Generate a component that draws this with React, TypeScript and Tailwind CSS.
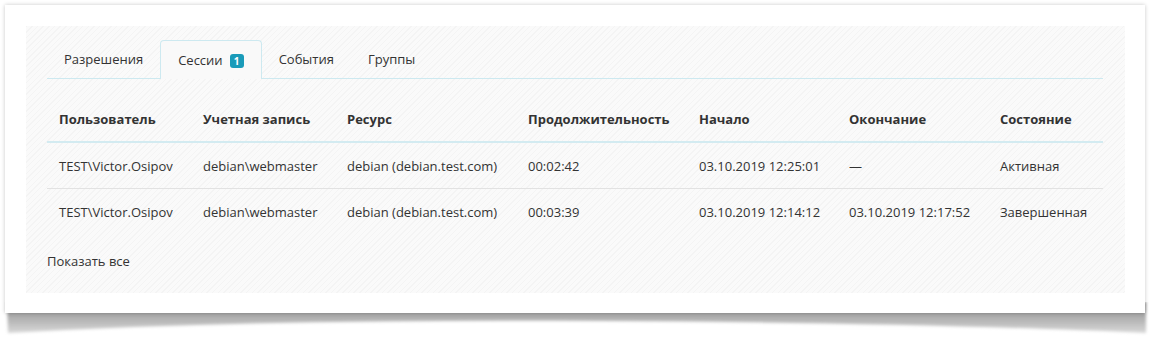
import React from 'react';

const columns = [
  'Пользователь',
  'Учетная запись',
  'Ресурс',
  'Продолжительность',
  'Начало',
  'Окончание',
  'Состояние',
];

const sessions = [
  ['TEST\\Victor.Osipov', 'debian\\webmaster', 'debian (debian.test.com)', '00:02:42', '03.10.2019 12:25:01', '—', 'Активная'],
  ['TEST\\Victor.Osipov', 'debian\\webmaster', 'debian (debian.test.com)', '00:03:39', '03.10.2019 12:14:12', '03.10.2019 12:17:52', 'Завершенная'],
];

const gridCols = 'grid grid-cols-[144px_144px_181px_171px_150px_151px_1fr]';

// curled "paper" shadow under the card
function CurlShadow() {
  return (
    <svg className="absolute left-0 top-[302px] -z-10" width="1152" height="40" viewBox="0 0 1152 40">
      <defs>
        <linearGradient id="sh" x1="0" y1="0" x2="0" y2="1">
          <stop offset="0" stopColor="#858585" />
          <stop offset="1" stopColor="#d8d8d8" />
        </linearGradient>
        <filter id="bl" x="-5%" y="-50%" width="110%" height="200%">
          <feGaussianBlur stdDeviation="1.6" />
        </filter>
      </defs>
      <path
        d="M7 0 H1146 V31 C1000 24 800 20 600 19 C400 18 200 20 8 31 Z"
        fill="url(#sh)"
        filter="url(#bl)"
      />
    </svg>
  );
}

export default function App() {
  return (
    <div className="relative isolate h-[343px] w-[1159px] bg-white pl-[5px] pt-[5px] font-['Open_Sans',sans-serif] text-[13px] text-[#333]">
      <CurlShadow />
      <div className="h-[308px] w-[1140px] bg-white pt-[21px] pl-[21px] shadow-[0_0_4px_rgba(0,0,0,0.22)]">
        <div className="h-[267px] w-[1099px] bg-[repeating-linear-gradient(135deg,#f4f4f4_0px,#f4f4f4_1px,#fafafa_1px,#fafafa_4px)] pt-[14px] pl-[21px] pr-[22px]">
          {/* Tabs */}
          <div className="flex h-[39px] border-b border-[#cde9f0]">
            <div className="flex items-center px-[17px] pt-[2px]">Разрешения</div>
            <div className="-mb-px flex items-center gap-[7px] rounded-t-[4px] border border-b-0 border-[#cde9f0] bg-[#f9f9f9] px-[17px] pt-[2px]">
              Сессии
              <span className="flex h-[14px] w-[14px] items-center justify-center rounded-[3px] bg-[#1a9bb9] text-[10px] font-bold leading-none text-white">
                1
              </span>
            </div>
            <div className="flex items-center px-[17px] pt-[2px]">События</div>
            <div className="flex items-center px-[17px] pt-[2px]">Группы</div>
          </div>

          {/* Table */}
          <div className={`${gridCols} mt-[18px] h-[46px] items-center border-b-2 border-[#d3ebf1] pt-[1px] font-bold`}>
            {columns.map((c) => (
              <div key={c} className="pl-[12px]">{c}</div>
            ))}
          </div>
          {sessions.map((row, i) => (
            <div
              key={i}
              className={`${gridCols} h-[46px] items-center pt-[2px] ${i === 0 ? 'border-b border-[#e2e2e2]' : ''}`}
            >
              {row.map((cell, j) => (
                <div key={j} className="pl-[12px] whitespace-nowrap">{cell}</div>
              ))}
            </div>
          ))}

          <div className="mt-[17px]">Показать все</div>
        </div>
      </div>
    </div>
  );
}
